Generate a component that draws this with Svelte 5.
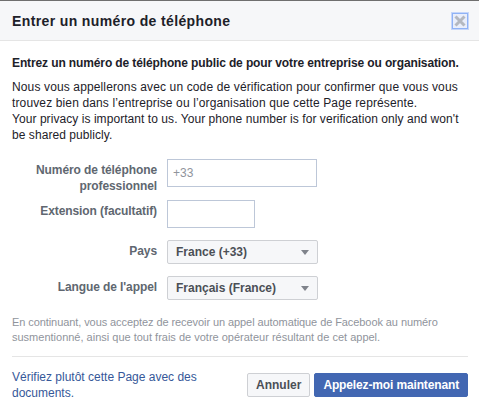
<script>
	let phone = $state('');
	let extension = $state('');
	const fields = [
		{ label: 'Pays', value: 'France (+33)' },
		{ label: "Langue de l'appel", value: 'Français (France)' }
	];
</script>

<div class="dialog">
	<div class="top"></div>
	<header>
		<h1>Entrer un numéro de téléphone</h1>
		<button class="close" aria-label="Fermer">
			<svg width="12" height="12" viewBox="0 0 12 12">
				<path d="M1.5 1.5l9 9M10.5 1.5l-9 9" stroke="#b4b8c0" stroke-width="3" />
			</svg>
		</button>
	</header>

	<div class="body">
		<p class="lead">Entrez un numéro de téléphone public de pour votre entreprise ou organisation.</p>
		<p class="intro">
			<span class="fr">Nous vous appellerons avec un code de vérification pour confirmer que vous vous</span><br />
			<span class="fr">trouvez bien dans l’entreprise ou l’organisation que cette Page représente.</span><br />
			<span class="en">Your privacy is important to us. Your phone number is for verification only and won't</span><br />
			<span class="en">be shared publicly.</span>
		</p>

		<div class="form">
			<div class="row first">
				<label for="phone">Numéro de téléphone professionnel</label>
				<input id="phone" class="wide" placeholder="+33" bind:value={phone} />
			</div>
			<div class="row second">
				<label for="ext">Extension (facultatif)</label>
				<input id="ext" class="narrow" bind:value={extension} />
			</div>
			{#each fields as field}
				<div class="row pick">
					<span class="label">{field.label}</span>
					<div class="select">
						<span>{field.value}</span>
						<i class="arrow"></i>
					</div>
				</div>
			{/each}
		</div>

		<p class="note">
			<span class="one">En continuant, vous acceptez de recevoir un appel automatique de Facebook au numéro</span><br />
			<span>susmentionné, ainsi que tout frais de votre opérateur résultant de cet appel.</span>
		</p>

		<footer>
			<a href="#docs">Vérifiez plutôt cette Page avec des documents.</a>
			<div class="actions">
				<button class="btn">Annuler</button>
				<button class="btn primary">Appelez-moi maintenant</button>
			</div>
		</footer>
	</div>
</div>

<style>
	:global(body) {
		background: #fff;
	}
	.dialog {
		width: 479px;
		height: 412px;
		overflow: hidden;
		font-family: 'Liberation Sans', Arial, sans-serif;
		font-size: 12px;
		line-height: 16px;
		color: #1d2129;
	}
	.top {
		height: 1px;
		background: #6f6f6f;
	}
	header {
		display: flex;
		align-items: center;
		justify-content: space-between;
		height: 39px;
		padding: 0 12px;
		background: #f6f7f9;
		border-bottom: 1px solid #e5e5e5;
	}
	h1 {
		margin: 0;
		font-size: 14px;
		font-weight: bold;
		color: #1d2129;
		letter-spacing: 0.37px;
	}
	.close {
		display: flex;
		align-items: center;
		justify-content: center;
		width: 16px;
		height: 16px;
		margin-right: -1px;
		padding: 0;
		background: #e9eefb;
		border: 1px solid #8fb2f5;
		outline: 1px solid #c5d6fa;
	}
	.body {
		padding: 14px 11px 0 12px;
	}
	p {
		margin: 0;
	}
	.lead {
		font-weight: bold;
		white-space: nowrap;
		letter-spacing: -0.12px;
	}
	.intro {
		margin-top: 8px;
		white-space: nowrap;
	}
	.fr {
		letter-spacing: 0.13px;
	}
	.en {
		letter-spacing: 0.06px;
	}
	.form {
		margin-top: 16px;
	}
	.row {
		display: flex;
		align-items: flex-start;
		gap: 10px;
	}
	.row.first {
		height: 28px;
	}
	.row.second {
		margin-top: 13px;
	}
	.row.pick {
		margin-top: 12px;
	}
	label,
	.label {
		flex: none;
		width: 145px;
		text-align: right;
		font-weight: bold;
		color: #606770;
		padding-top: 3px;
		letter-spacing: -0.09px;
	}
	input {
		box-sizing: border-box;
		height: 28px;
		padding: 0 5px;
		font: inherit;
		background: #fff;
		border: 1px solid #bdc7d8;
		border-radius: 0;
		outline: none;
	}
	input::placeholder {
		color: #90949c;
		opacity: 1;
	}
	.wide {
		width: 150px;
	}
	.narrow {
		width: 88px;
	}
	.select {
		box-sizing: border-box;
		display: flex;
		align-items: center;
		justify-content: space-between;
		width: 151px;
		height: 24px;
		padding: 0 8px;
		font-weight: bold;
		color: #4b4f56;
		background: #f6f7f9;
		border: 1px solid #ced0d4;
		border-radius: 2px;
	}
	.arrow {
		width: 0;
		height: 0;
		border-left: 4.5px solid transparent;
		border-right: 4.5px solid transparent;
		border-top: 5px solid #7f838b;
	}
	.note {
		margin-top: 15px;
		font-size: 11px;
		line-height: 15px;
		color: #90949c;
		white-space: nowrap;
	}
	.note .one {
		letter-spacing: -0.08px;
	}
	footer {
		display: flex;
		justify-content: space-between;
		align-items: center;
		margin-top: 11px;
		padding-top: 12px;
		border-top: 1px solid #e5e5e5;
	}
	a {
		width: 210px;
		color: #365899;
		text-decoration: none;
	}
	.actions {
		display: flex;
		gap: 4px;
	}
	.btn {
		box-sizing: border-box;
		height: 24px;
		padding: 0 8px;
		font: inherit;
		font-weight: bold;
		color: #4b4f56;
		background: #f6f7f9;
		border: 1px solid #ced0d4;
		border-radius: 2px;
	}
	.primary {
		letter-spacing: -0.14px;
		color: #fff;
		background: #4267b2;
		border-color: #4267b2;
	}
</style>
